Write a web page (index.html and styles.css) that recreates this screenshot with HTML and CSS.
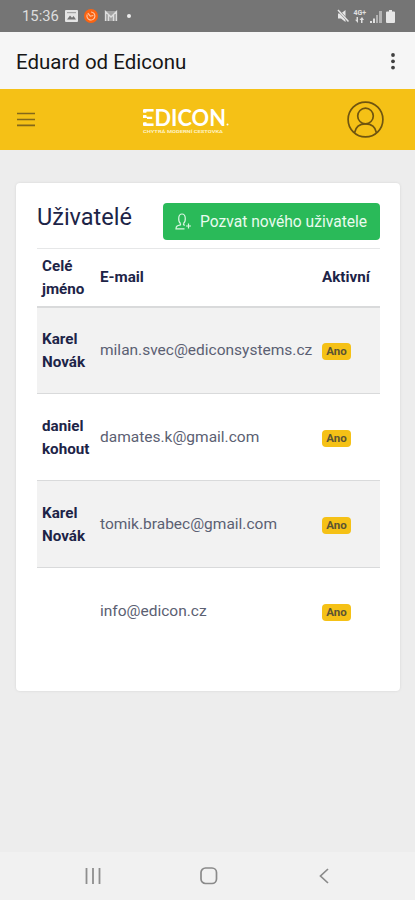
FILE: index.html
```html
<!DOCTYPE html>
<html lang="cs">
<head>
  <meta charset="UTF-8">
  <meta name="viewport" content="width=device-width, initial-scale=1.0">
  <title>Eduard od Ediconu</title>
  <link rel="stylesheet" href="styles.css">
</head>
<body>
  <div class="status-bar">
    <div class="status-left">
      <span class="clock">15:36</span>
      <svg width="13" height="12" viewBox="0 0 13 12">
        <rect width="13" height="12" rx="1" fill="#e4e4e4"/>
        <path d="M2 9.5l3-4 2 2.3 1.6-1.8L11 9.5z" fill="#757575"/>
        <rect x="2" y="2" width="9" height="1.2" fill="#a5a5a5"/>
      </svg>
      <svg width="14" height="14" viewBox="0 0 14 14">
        <circle cx="7" cy="7" r="7" fill="#fb6412"/>
        <path d="M3.2 5.500a4 4 0 1 0 3.800-2.500M3.800 4.200l2.500 3 3-.7" fill="none" stroke="#ffc9a8" stroke-width="1.100"/>
      </svg>
      <svg width="14" height="12" viewBox="0 0 14 12">
        <path d="M1 1h12v10H1z" fill="#a2a2a2"/>
        <path d="M1.500 11V1.500L7 7l5.500-5.500V11M4.500 11V5M9.500 11V5" fill="none" stroke="#dedede" stroke-width="1.300"/>
      </svg>
      <span class="dot"></span>
    </div>
    <div class="status-right">
      <svg width="12" height="14" viewBox="0 0 12 14">
        <path d="M1 4.500h3L8.500 1v12L4 9.500H1z" fill="#e6e6e6"/>
        <path d="M1 1l10.500 11.500" stroke="#757575" stroke-width="2.400"/>
        <path d="M1 1l10.500 11.500" stroke="#e6e6e6" stroke-width="1.500"/>
      </svg>
      <div class="network">
        <span>4G+</span>
        <svg width="9" height="6" viewBox="0 0 9 6">
          <path d="M1.500 0H3v6L0 2.800h1.500zM6 6V3L4.500 3 7 0l2 3H7.500v3z" fill="#e0e0e0"/>
        </svg>
      </div>
      <svg width="12" height="13" viewBox="0 0 12 13">
        <path d="M0 11h2v2H0zM3 8.500h2V13H3z" fill="#e0e0e0"/>
        <path d="M6 5h2v8H6zM9 1h3v12H9z" fill="#b2b2b2"/>
      </svg>
      <svg width="9" height="13" viewBox="0 0 9 13">
        <path d="M3 0h3v1.500h2q1 0 1 1V12q0 1-1 1H1q-1 0-1-1V2.500q0-1 1-1h2z" fill="#e6e6e6"/>
      </svg>
    </div>
  </div>

  <div class="title-bar">
    <h1>Eduard od Ediconu</h1>
    <svg width="4" height="17" viewBox="0 0 4 17" fill="#404040">
      <circle cx="2" cy="2" r="1.900"/>
      <circle cx="2" cy="8.300" r="1.900"/>
      <circle cx="2" cy="14.600" r="1.900"/>
    </svg>
  </div>

  <header class="navbar">
    <svg class="menu" width="18" height="15" viewBox="0 0 18 15">
      <path d="M0 1.500h18M0 7.500h18M0 13.300h18" stroke="#84681a" stroke-width="1.700"/>
    </svg>
    <svg class="logo" width="89" height="30" viewBox="0 0 89 30">
      <text class="logo-name" x="1" y="20.500" textLength="84" lengthAdjust="spacingAndGlyphs">EDICON</text>
      <!-- gaps that split the E into three bars -->
      <path class="logo-gap" d="M0 7.400h6v2.800H0zM0 13h6v4.200H0z"/>
      <path d="M2 4.700h3v2.700H2zM2 10.200h3v2.800H2zM2 17.800h3v2.700H2z" fill="#fff"/>
      <circle cx="86.500" cy="19.500" r="1" fill="#fff"/>
      <text class="logo-claim" x="2" y="27.500" textLength="80" lengthAdjust="spacingAndGlyphs">CHYTRÁ MODERNÍ CESTOVKA</text>
    </svg>
    <svg class="avatar" width="37" height="37" viewBox="0 0 37 37" fill="none" stroke="#6f5510" stroke-width="1.700">
      <circle cx="18.500" cy="18.500" r="17.400"/>
      <circle cx="18.500" cy="15" r="7.800"/>
      <path d="M7.500 31.800c1-5.500 5-9 11-9s10 3.500 11 9"/>
    </svg>
  </header>

  <main>
    <section class="card">
      <div class="card-header">
        <h2>Uživatelé</h2>
        <a href="#" class="btn">
          <svg width="17" height="17" viewBox="0 0 17 17" fill="none" stroke="#d9f6e2" stroke-width="1.200">
            <path d="M5.500 10.500C3 8.500 2.800 1 7 1s4 7.500 1.500 9.500M5.500 10.500v1.300C2.500 12.600 1 13 1 15.800h8.500M8.500 10.500v1.300l1.500.5M13.500 10.500v5M11 13h5"/>
          </svg>
          Pozvat nového uživatele
        </a>
      </div>
      <table>
        <thead>
          <tr>
            <th class="col-name">Celé jméno</th>
            <th class="col-mail">E-mail</th>
            <th>Aktivní</th>
          </tr>
        </thead>
        <tbody>
          <tr>
            <th>Karel Novák</th>
            <td>milan.svec@ediconsystems.cz</td>
            <td><span class="badge">Ano</span></td>
          </tr>
          <tr>
            <th>daniel kohout</th>
            <td>damates.k@gmail.com</td>
            <td><span class="badge">Ano</span></td>
          </tr>
          <tr>
            <th>Karel Novák</th>
            <td>tomik.brabec@gmail.com</td>
            <td><span class="badge">Ano</span></td>
          </tr>
          <tr>
            <th></th>
            <td>info@edicon.cz</td>
            <td><span class="badge">Ano</span></td>
          </tr>
        </tbody>
      </table>
    </section>
  </main>

  <nav class="system-nav">
    <svg width="16" height="16" viewBox="0 0 16 16">
      <path d="M1.500 0v16M8 0v16M14.500 0v16" stroke="#8e8e8e" stroke-width="1.800"/>
    </svg>
    <svg width="18" height="18" viewBox="0 0 18 18">
      <rect x="1" y="1" width="15.500" height="15.500" rx="4.500" fill="none" stroke="#8a8a8a" stroke-width="1.700"/>
    </svg>
    <svg width="16" height="16" viewBox="0 0 16 16">
      <path d="M12 1L4.500 8l7.500 7" fill="none" stroke="#8a8a8a" stroke-width="1.700"/>
    </svg>
  </nav>
</body>
</html>
```
FILE: styles.css
```css
:root {
  --yellow: #f5c116;
  --green: #2aba59;
  --navy: #1d2447;
  --text: #5b6072;
  --line: #d9dadb;
}

* {
  margin: 0;
  padding: 0;
  box-sizing: border-box;
}

body {
  display: flex;
  flex-direction: column;
  height: 900px;
  font-family: Roboto, sans-serif;
  background-color: #ededed;
  color: var(--text);
}

svg {
  display: block;
  flex: none;
}

.status-bar {
  display: flex;
  justify-content: space-between;
  align-items: center;
  height: 32px;
  padding: 0 20px 0 22px;
  background-color: #757575;
}

.status-left,
.status-right {
  display: flex;
  align-items: center;
}

.status-left {
  gap: 6px;
}

.status-right {
  gap: 4px;
}

.clock {
  width: 37px;
  font-size: 14.8px;
  color: #dedede;
}

.dot {
  width: 4px;
  height: 4px;
  margin-left: 3px;
  border-radius: 50%;
  background: #ececec;
}

.network {
  display: flex;
  flex-direction: column;
  align-items: center;
  font-size: 7px;
  font-weight: 700;
  line-height: 7px;
  color: #e0e0e0;
}

.title-bar {
  display: flex;
  justify-content: space-between;
  align-items: center;
  height: 57px;
  padding: 2px 20px 0 16px;
  background-color: #f6f6f6;
}

.title-bar h1 {
  font-size: 20.5px;
  font-weight: 400;
  color: #161616;
}

.navbar {
  display: flex;
  align-items: center;
  height: 61px;
  padding: 0 31px 0 17px;
  background-color: var(--yellow);
}

.logo {
  margin-left: 106px;
}

.logo-name {
  font-family: Lato, sans-serif;
  font-size: 22px;
  font-weight: 700;
  fill: #fff;
}

.logo-claim {
  font-size: 3.6px;
  font-weight: 700;
  fill: #fff3c4;
}

.logo-gap {
  fill: var(--yellow);
}

.avatar {
  margin-left: auto;
}

main {
  flex: 1;
  padding: 33px 15px 0 16px;
}

.card {
  height: 508px;
  padding: 20px 20px 0 21px;
  border-radius: 4px;
  background: #fff;
  box-shadow: 0 0 3px rgba(0, 0, 0, 0.1);
}

.card-header {
  display: flex;
  justify-content: space-between;
  height: 45px;
}

.card-header h2 {
  font-size: 23.5px;
  font-weight: 400;
  line-height: 29px;
  color: var(--navy);
}

.btn {
  display: flex;
  align-items: center;
  gap: 8px;
  width: 217px;
  height: 37px;
  padding-left: 12px;
  border-radius: 4px;
  background-color: var(--green);
  color: #e9fbef;
  font-size: 15.6px;
  text-decoration: none;
  white-space: nowrap;
}

table {
  width: 343px;
  table-layout: fixed;
  border-collapse: collapse;
}

th,
td {
  height: 87px;
  padding: 1px 5px 0;
  border-top: 1px solid var(--line);
  font-size: 15.2px;
  line-height: 23px;
  text-align: left;
  vertical-align: middle;
}

th {
  font-weight: 700;
  color: var(--navy);
}

td {
  font-size: 15.5px;
  white-space: nowrap;
}

thead th {
  height: 58px;
  border-top-color: #e6e7e8;
  border-bottom: 2px solid var(--line);
}

.col-name {
  width: 58px;
}

.col-mail {
  width: 222px;
}

tbody tr:nth-child(odd) {
  background-color: #f2f2f2;
}

.badge {
  display: inline-block;
  width: 29px;
  height: 17px;
  border-radius: 4px;
  background-color: var(--yellow);
  color: #5b5433;
  font-size: 11.5px;
  font-weight: 700;
  line-height: 17px;
  text-align: center;
}

.system-nav {
  display: flex;
  justify-content: space-between;
  align-items: center;
  height: 48px;
  padding: 0 83px 0 85px;
  background-color: #f1f1f1;
}
```
